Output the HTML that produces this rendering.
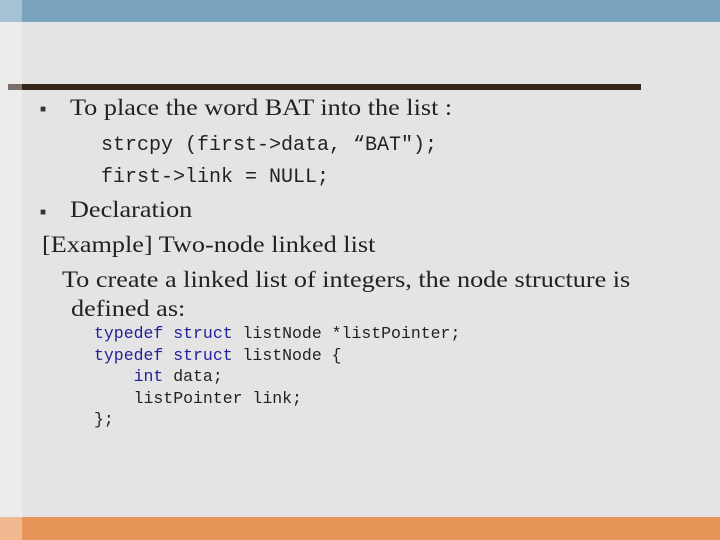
<!DOCTYPE html><html><head><style>
body{margin:0;width:720px;height:540px;overflow:hidden;position:relative;background:#e4e4e4;font-family:"Liberation Serif",serif;color:#222}
.a{position:absolute;white-space:pre}
.s{font-size:23px;transform:scaleX(1.14);transform-origin:0 0}
.m{font-family:"Liberation Mono",monospace;font-size:20px;color:#222}
.c{font-family:"Liberation Mono",monospace;font-size:16.5px;line-height:21.5px;color:#222}
.k{color:#1f1f9a}
.b{font-size:10px;color:#333}
</style></head><body>
<div style="position:absolute;left:0;top:0;width:720px;height:22px;background:#7aa3c0"></div>
<div style="position:absolute;left:0;top:0;width:22px;height:22px;background:#a6c0d4"></div>
<div style="position:absolute;left:0;top:22px;width:22px;height:495px;background:#ececec"></div>
<div style="position:absolute;left:8px;top:84px;width:14px;height:6px;background:#7a6f68"></div>
<div style="position:absolute;left:22px;top:84px;width:619px;height:6px;background:#35271c"></div>
<div style="position:absolute;left:0;top:517px;width:720px;height:23px;background:#e8955a"></div>
<div style="position:absolute;left:0;top:517px;width:22px;height:23px;background:#f0b88f"></div>
<div class="a b" style="left:40px;top:104px">■</div>
<div class="a s" style="left:70px;top:95px">To place the word BAT into the list :</div>
<div class="a m" style="left:101px;top:134px">strcpy (first-&gt;data, “BAT");</div>
<div class="a m" style="left:101px;top:166px">first-&gt;link = NULL;</div>
<div class="a b" style="left:40px;top:207px">■</div>
<div class="a s" style="left:70px;top:197px">Declaration</div>
<div class="a s" style="left:42px;top:232px">[Example] Two-node linked list</div>
<div class="a s" style="left:62px;top:267px">To create a linked list of integers, the node structure is</div>
<div class="a s" style="left:71px;top:296px">defined as:</div>
<div class="a c" style="left:94px;top:323px"><span class="k">typedef struct</span> listNode *listPointer;
<span class="k">typedef struct</span> listNode {
    <span class="k">int</span> data;
    listPointer link;
};</div>
</body></html>
